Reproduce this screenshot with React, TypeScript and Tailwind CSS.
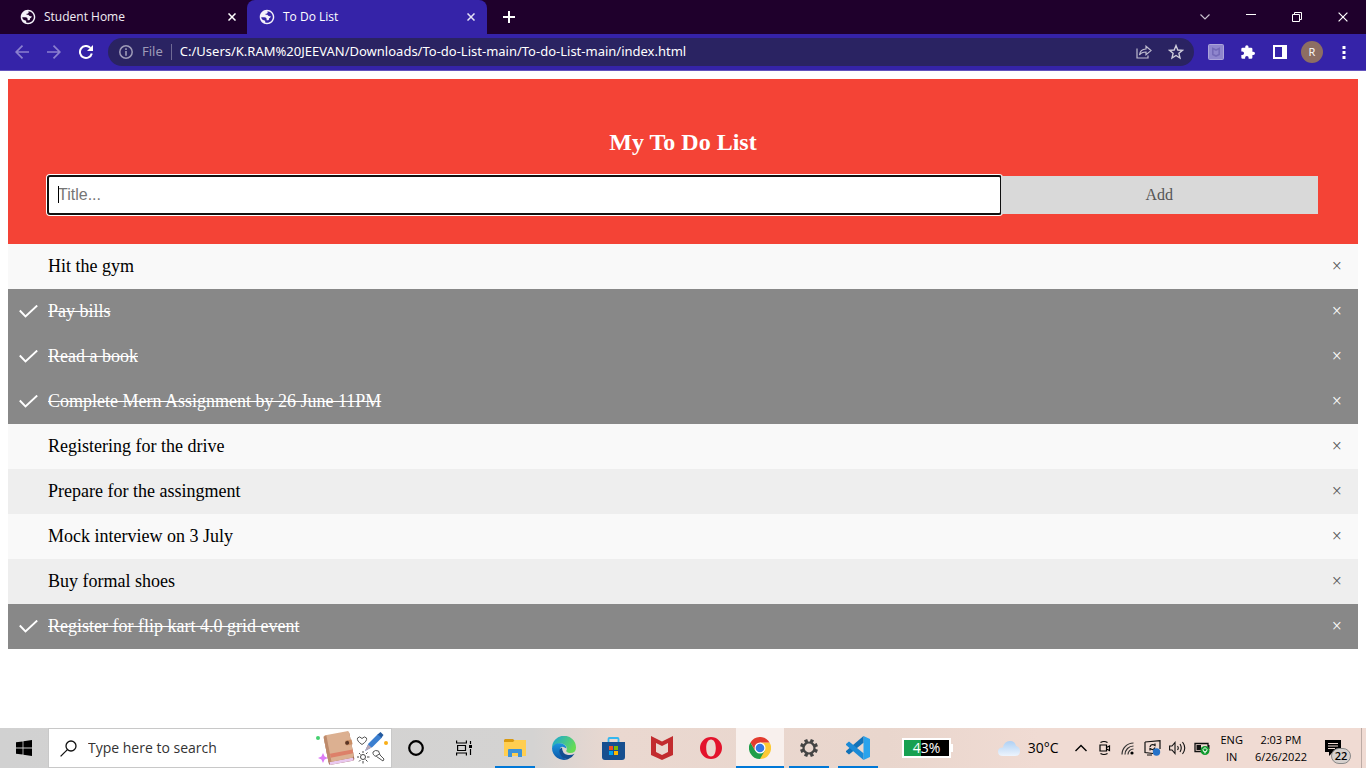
import React, { useState } from "react";

const ui = "font-['Open_Sans','Noto_Sans',sans-serif]";

function Globe() {
  return (
    <svg viewBox="1 1 22 22" className="h-4 w-4 shrink-0" aria-hidden="true">
      <path
        fill="#f4f2fa"
        d="M12 2C6.480 2 2 6.480 2 12s4.480 10 10 10 10-4.480 10-10S17.520 2 12 2zM4 12.500h4.500c2 0 3 1 3 2.800v1.200H13.500c1.200 0 1.500-1.500 1.300-2.800 1.700-.2 2.200-1.500 2.200-3.200-2 .8-3.500.2-4.500-1.500H10V7.500c1.500 0 2.800-.8 3-2.200L12.500 4c4 .3 7.500 3.500 7.500 8s-3.500 8-8 8c-1 0-1.500-.2-2.500-.5V17C6.500 17 4.500 15.500 4 12.500z"
      />
    </svg>
  );
}

function Cross({ size }: { size: "sm" | "lg" }) {
  return (
    <svg viewBox="0 0 10 10" className={size === "sm" ? "h-2 w-2" : "h-[10px] w-[10px]"} aria-hidden="true">
      <path d="M0.6 0.6 L9.4 9.4 M9.4 0.6 L0.6 9.4" stroke="currentColor" strokeWidth={size === "sm" ? 1.9 : 1.2} />
    </svg>
  );
}

function BrowserTabs() {
  return (
    <div className="flex h-[34px] items-center bg-[#1f002c] text-xs text-white">
      <div className="flex h-full w-[247px] items-center pr-[11px] pl-5">
        <Globe />
        <span className="ml-2 flex-1 text-[#f1eef4]">Student Home</span>
        <button aria-label="Close Student Home" className="text-white"><Cross size="sm" /></button>
      </div>
      <div className="flex h-full w-60 items-center rounded-t-lg bg-[#3523a8] pr-3 pl-3">
        <Globe />
        <span className="ml-2 flex-1 text-white">To Do List</span>
        <button aria-label="Close To Do List" className="text-[#e5e2f6]"><Cross size="sm" /></button>
      </div>
      <button aria-label="New tab" className="ml-4">
        <svg viewBox="0 0 12 12" className="h-3 w-3"><path d="M6 0V12M0 6H12" stroke="#fff" strokeWidth="2" /></svg>
      </button>
      <div className="ml-auto flex h-7 items-center gap-9 pr-[18px]">
        <button aria-label="Search tabs">
          <svg viewBox="0 0 10 6" className="h-[6px] w-[10px]"><path d="M0.5 0.5L5 5L9.5 0.5" fill="none" stroke="#c9c0cf" strokeWidth="1.2" /></svg>
        </button>
        <button aria-label="Minimize">
          <svg viewBox="0 0 10 10" className="h-[10px] w-[10px]"><path d="M0 2.5H10" stroke="#fff" /></svg>
        </button>
        <button aria-label="Restore">
          <svg viewBox="0 0 10 10" className="h-[10px] w-[10px]"><path d="M.5 2.5H7.5V9.5H.5ZM2.5 2.5V.5H9.5V7.5H7.5" fill="none" stroke="#fff" /></svg>
        </button>
        <button aria-label="Close window"><Cross size="lg" /></button>
      </div>
    </div>
  );
}

function Toolbar() {
  const slot = "flex w-8 items-center justify-center";
  return (
    <div className="flex h-[37px] items-center border-b border-[#6354bd] bg-[#3523a8] pl-[15px] text-white">
      <button aria-label="Back">
        <svg viewBox="0 0 14 14" className="h-[14px] w-[14px]"><path d="M14 7H1M7.5 .7L1.2 7L7.5 13.3" fill="none" stroke="#8b80cf" strokeWidth="1.7" /></svg>
      </button>
      <button aria-label="Forward" className="ml-[18px]">
        <svg viewBox="0 0 14 14" className="h-[14px] w-[14px]"><path d="M0 7H13M6.5 .7L12.8 7L6.5 13.3" fill="none" stroke="#8b80cf" strokeWidth="1.7" /></svg>
      </button>
      <button aria-label="Reload" className="ml-[18px]">
        <svg viewBox="0 0 14 14" className="h-[14px] w-[14px]">
          <path d="M12.8 8.4A6 6 0 1 1 11.4 2.9" fill="none" stroke="#fff" strokeWidth="2" />
          <path d="M14 0V6H8Z" fill="#fff" />
        </svg>
      </button>
      <div className="ml-[15px] flex h-7 min-w-0 flex-1 items-center rounded-full bg-[#2a2362] pr-[10px] pl-[11px] font-['Noto_Sans',sans-serif] text-[13px]">
        <svg viewBox="0 0 14 14" className="h-[14px] w-[14px] shrink-0" aria-hidden="true">
          <circle cx="7" cy="7" r="6.2" fill="none" stroke="#9f9bb8" strokeWidth="1.5" />
          <path d="M7 3.2V4.9M7 6V10.8" stroke="#9f9bb8" strokeWidth="1.6" />
        </svg>
        <span className="ml-[9px] text-[#9f9bb8]">File</span>
        <span className="mx-[8px] h-4 w-px bg-[#6f6a94]" />
        <input
          aria-label="Address"
          className="min-w-0 flex-1 bg-transparent text-white outline-none"
          defaultValue="C:/Users/K.RAM%20JEEVAN/Downloads/To-do-List-main/To-do-List-main/index.html"
        />
        <button aria-label="Share">
          <svg viewBox="0 0 16 14" className="h-[14px] w-4">
            <path d="M1 3.5V13H12V10.5" fill="none" stroke="#bfbccf" strokeWidth="1.2" />
            <path d="M3.5 10Q4 4.2 10 4V1.2L15 5.6L10 9.8V7Q5.5 7 3.5 10Z" fill="none" stroke="#bfbccf" strokeWidth="1.2" />
          </svg>
        </button>
        <button aria-label="Bookmark" className="ml-4">
          <svg viewBox="0 0 16 16" className="h-4 w-4"><path d="M8 1.6L9.8 6L14.5 6.3L10.9 9.3L12 14L8 11.5L4 14L5.1 9.3L1.5 6.3L6.2 6Z" fill="none" stroke="#cfcddb" strokeWidth="1.4" /></svg>
        </button>
      </div>
      <div className="mx-[6px] flex items-center">
        <button aria-label="McAfee extension" className={slot}>
          <svg viewBox="0 0 16 16" className="h-4 w-4">
            <rect x=".5" y=".5" width="15" height="15" rx="1" fill="#8f86cd" stroke="#aba4da" />
            <path d="M4.8 4.5L8 6L11.2 4.5V10.5L8 12L4.8 10.5Z" fill="none" stroke="#746ab8" strokeWidth="1.6" />
          </svg>
        </button>
        <button aria-label="Extensions" className={slot}>
          <svg viewBox="2 1 21.500 21" className="h-[14px] w-[14px]">
            <path fill="#fff" d="M21 11h-1.500V7a2 2 0 0 0-2-2h-4V3.500a2.500 2.500 0 0 0-5 0V5h-4a2 2 0 0 0-2 2v3.800H4a2.700 2.700 0 0 1 0 5.400H2.500V20a2 2 0 0 0 2 2h3.800v-1.500a2.700 2.700 0 0 1 5.400 0V22h3.800a2 2 0 0 0 2-2v-4H21a2.500 2.500 0 0 0 0-5z" />
          </svg>
        </button>
        <button aria-label="Side panel" className={slot}>
          <svg viewBox="0 0 14 14" className="h-[14px] w-[14px]"><path d="M0 0H14V14H0ZM2 2V12H9V2Z" fill="#fff" fillRule="evenodd" /></svg>
        </button>
        <button aria-label="Profile" className={slot}>
          <span className="h-[22px] w-[22px] rounded-full bg-[#8d6e63] text-center text-[11px] leading-[22px]">R</span>
        </button>
        <button aria-label="Menu" className={slot}>
          <svg viewBox="0 0 4 14" className="h-[14px] w-1"><path d="M.5 1h3v3h-3zM.5 6h3v3h-3zM.5 11h3v3h-3z" fill="#fff" /></svg>
        </button>
      </div>
    </div>
  );
}

const initial = [
  { text: "Hit the gym", done: false },
  { text: "Pay bills", done: true },
  { text: "Read a book", done: true },
  { text: "Complete Mern Assignment by 26 June 11PM", done: true },
  { text: "Registering for the drive", done: false },
  { text: "Prepare for the assingment", done: false },
  { text: "Mock interview on 3 July", done: false },
  { text: "Buy formal shoes", done: false },
  { text: "Register for flip kart 4.0 grid event", done: true },
];

function TodoPage() {
  const [items, setItems] = useState(initial);
  const [title, setTitle] = useState("");
  const add = (e: React.FormEvent) => {
    e.preventDefault();
    if (!title) return;
    setItems([...items, { text: title, done: false }]);
    setTitle("");
  };
  const toggle = (i: number) => setItems(items.map((it, n) => (n === i ? { ...it, done: !it.done } : it)));
  return (
    <main className="flex-1 bg-white p-2 font-['Liberation_Serif',serif]">
      <header className="bg-[#f44336] px-10 pt-[50px] pb-[30px] text-center text-white">
        <h1 className="mb-5 text-2xl leading-[27px] font-bold">My To Do List</h1>
        <form className="flex" onSubmit={add}>
          <div className="relative w-3/4">
            <input
              aria-label="Title"
              placeholder="Title..."
              value={title}
              onChange={(e) => setTitle(e.target.value)}
              className="block h-[38px] w-full rounded-[2px] bg-white p-[10px] font-['Liberation_Sans',sans-serif] text-base text-black shadow-[0_0_0_2px_#fff] outline-2 -outline-offset-1 outline-[#101010] placeholder:text-[#757575]"
            />
            {title === "" && <span className="absolute top-[10px] left-[10px] h-[17px] w-px bg-black" />}
          </div>
          <button className="relative h-[38px] w-1/4 bg-[#d9d9d9] text-base text-[#555]">Add</button>
        </form>
      </header>
      <ul className="text-lg leading-[21px]">
        {items.map((it, i) => (
          <li
            key={i}
            className={
              it.done
                ? "flex items-center bg-[#888] text-white"
                : "flex items-center text-black odd:bg-[#f9f9f9] even:bg-[#eee]"
            }
          >
            <button onClick={() => toggle(i)} className="flex flex-1 items-center py-3 text-left">
              <span className="w-10 pl-[11px]">
                {it.done && (
                  <svg viewBox="0 0 19 14" className="h-[14px] w-[19px]" aria-hidden="true">
                    <path d="M.8 5.500L6.500 11.500L18.200 .5" fill="none" stroke="#fff" strokeWidth="1.900" />
                  </svg>
                )}
              </span>
              <span className={it.done ? "line-through" : ""}>{it.text}</span>
            </button>
            <button
              aria-label={"Remove " + it.text}
              onClick={() => setItems(items.filter((_, n) => n !== i))}
              className={it.done ? "px-4 py-3" : "px-4 py-3 text-[#555]"}
            >
              ×
            </button>
          </li>
        ))}
      </ul>
    </main>
  );
}

function SearchArt() {
  return (
    <svg viewBox="0 0 76 38" className="h-[38px] w-[76px]" aria-hidden="true">
      <circle cx="3" cy="9" r="2" fill="#45d070" />
      <path d="M8 24L9.600 27.400L13 29L9.600 30.600L8 34L6.400 30.600L3 29L6.400 27.400Z" fill="#dc7cf5" />
      <g transform="rotate(-11 24 19)">
        <rect x="11" y="5" width="26" height="29" rx="2" fill="#9c6650" />
        <rect x="12" y="31" width="24" height="3" fill="#e9c8ef" />
        <rect x="11" y="4" width="26" height="27" rx="2" fill="#dcb091" />
        <path d="M11 5V31H14V4Z" fill="#bd8a6b" />
        <path d="M14 23H37V27H14Z" fill="#dd8069" />
        <path d="M32 13H38V18H32Q29.500 15.500 32 13Z" fill="#c98e65" />
        <circle cx="33" cy="15.500" r="2" fill="#593526" />
      </g>
      <path d="M47 15.500Q41.500 12 42.500 9Q44.500 6.500 47 9.500Q49.500 6.500 51.500 9Q52.500 12 47 15.500Z" fill="none" stroke="#555" />
      <path d="M50 22L53.500 14.500L63 5L67 8.500L57.500 18Z" fill="#3b7fd0" />
      <path d="M62.500 5.500L65.500 3L68.500 6L66.500 8.800Z" fill="#245a9f" />
      <path d="M50 22L53 15.500L56.500 18.500Z" fill="#b9a6b3" />
      <circle cx="71" cy="14" r="2" fill="#f8ae17" />
      <circle cx="48" cy="28" r="2.500" fill="none" stroke="#444" />
      <path d="M48 22V24M48 32V34.500M42 28H44M52 28H54.500M44 24L45.500 25.500M50.500 30.500L52.500 32.500M52.500 23.500L51 25M44 32.500L45.500 31" stroke="#444" />
      <path d="M58 23Q60 20.500 63.500 22L65 26L69 30L68 32L61.500 27.500Q57.500 26.500 58 23ZM61 27L64.500 25" fill="none" stroke="#555" />
    </svg>
  );
}

function TaskButton({ label, state, children }: { label: string; state?: "open" | "active"; children: React.ReactNode }) {
  return (
    <button
      aria-label={label}
      className={
        state === "active"
          ? "flex h-10 w-12 items-center justify-center border-b-2 border-[#0078d7] bg-[#f8f0ed] pt-[2px]"
          : state === "open"
            ? "mx-1 flex h-10 w-10 items-center justify-center border-b-2 border-[#0078d7] pt-[2px]"
            : "flex h-10 w-12 items-center justify-center"
      }
    >
      {children}
    </button>
  );
}

const teeth = [0, 45, 90, 135, 180, 225, 270, 315];

function Taskbar() {
  return (
    <footer className="flex h-10 items-center bg-[linear-gradient(90deg,#d1d1d1,#d4d3d2_39%,#ead8d0_45%,#e9d6cd_65%,#f0dbd3_76%)] text-black">
      <button aria-label="Start" className="flex h-10 w-12 shrink-0 items-center justify-center">
        <svg viewBox="0 0 16 16" className="h-4 w-4"><path d="M0 2.300L6.600 1.400V7.600H0ZM7.400 1.300L16 0V7.600H7.400ZM0 8.400H6.600V14.600L0 13.700ZM7.400 8.400H16V16L7.400 14.800Z" /></svg>
      </button>
      <label className="flex h-10 w-[344px] shrink-0 items-center border border-[#c8c8c8] bg-white pl-[11px]">
        <svg viewBox="0 0 17 17" className="h-[17px] w-[17px] shrink-0" aria-hidden="true">
          <circle cx="11" cy="6" r="5" fill="none" stroke="#111" strokeWidth="1.300" />
          <path d="M7.400 9.600L.6 16.400" stroke="#111" strokeWidth="1.300" />
        </svg>
        <input aria-label="Search" placeholder="Type here to search" className="ml-[11px] min-w-0 flex-1 bg-transparent text-sm outline-none placeholder:text-[#333]" />
        <SearchArt />
      </label>
      <nav className="flex shrink-0">
        <TaskButton label="Cortana">
          <svg viewBox="0 0 16 16" className="h-4 w-4"><circle cx="8" cy="8" r="6.800" fill="none" stroke="#000" strokeWidth="2.200" /></svg>
        </TaskButton>
        <TaskButton label="Task view">
          <svg viewBox="0 0 16 16" className="h-4 w-4">
            <path d="M.6 .5V3H10.400V.5M.6 15.500V13H10.400V15.500M1.600 5.500H9.500V10.500H1.600ZM14.500 1V4M14.500 9V15" fill="none" stroke="#000" strokeWidth="1.200" />
            <path d="M13 5h3v3h-3z" />
          </svg>
        </TaskButton>
      </nav>
      <nav className="ml-[3px] flex shrink-0 gap-px">
        <TaskButton label="File Explorer" state="open">
          <svg viewBox="0 0 22 18" className="h-[18px] w-[22px]">
            <path d="M1 0H9L11 2V6H0V1Z" fill="#d99a10" />
            <path d="M0 3H9L11 1H22V17H0Z" fill="#ffce50" />
            <path d="M4 18V11Q4 10 5 10H17Q18 10 18 11V18H14V14H8V18Z" fill="#3d93d8" />
          </svg>
        </TaskButton>
        <TaskButton label="Edge">
          <svg viewBox="0 0 24 24" className="h-6 w-6">
            <defs>
              <linearGradient id="edgeTop" x1="0" y1="0" x2="1" y2=".5"><stop offset="0" stopColor="#16a3dc" /><stop offset="1" stopColor="#66dc55" /></linearGradient>
              <linearGradient id="edgeLow" x1="0" y1="0" x2="0" y2="1"><stop offset="0" stopColor="#1c95df" /><stop offset="1" stopColor="#0b55a5" /></linearGradient>
            </defs>
            <path d="M0 12A12 12 0 0 1 24 11.500Q24 17 18 17Q14 17 14.300 14.500Q16 12 13 9Q7 5 0 12Z" fill="url(#edgeTop)" />
            <path d="M0 12Q2 7 8 7.300Q14 8 14.500 12.500Q8 8.500 8 14Q8.500 22 16 23.300A12 12 0 0 1 0 12Z" fill="url(#edgeLow)" />
            <path d="M10 11.500Q6 13 8 18Q10 23 16 23.300Q20.500 21.500 22.500 17.800Q19.500 19.500 16 19Q10 18 10 11.500Z" fill="#124d91" />
          </svg>
        </TaskButton>
        <TaskButton label="Microsoft Store">
          <svg viewBox="0 0 23 23" className="h-[23px] w-[23px]">
            <path d="M6.500 6V2Q6.500 1 7.500 1H15.500Q16.500 1 16.500 2V6" fill="none" stroke="#35b7ef" strokeWidth="1.800" />
            <path d="M0 5H23V20Q23 23 20 23H3Q0 23 0 20Z" fill="#174f8f" />
            <path d="M7 9h4v4H7z" fill="#f25022" /><path d="M12 9h4v4h-4z" fill="#7fba00" />
            <path d="M7 14h4v4H7z" fill="#00a4ef" /><path d="M12 14h4v4h-4z" fill="#ffb900" />
          </svg>
        </TaskButton>
        <TaskButton label="McAfee">
          <svg viewBox="0 0 22 24" className="h-6 w-[22px]"><path d="M0 0L11 5.500L22 0V19L11 24L0 19ZM5 7V16L11 19L17 16V7L11 10Z" fill="#c22c2f" fillRule="evenodd" /></svg>
        </TaskButton>
        <TaskButton label="Opera">
          <svg viewBox="0 0 22 22" className="h-[22px] w-[22px]"><path d="M11 0A11 11 0 1 0 11 22A11 11 0 1 0 11 0ZM11 2.500C14 2.500 15.800 6 15.800 11S14 19.500 11 19.500S6.200 16 6.200 11S8 2.500 11 2.500Z" fill="#e3132c" fillRule="evenodd" /></svg>
        </TaskButton>
        <TaskButton label="Chrome" state="active">
          <svg viewBox="0 0 22 22" className="h-[22px] w-[22px]">
            <path d="M11 11L11 5.500H20.530A11 11 0 0 1 11 22Z" fill="#fcc934" />
            <path d="M1.470 5.500A11 11 0 0 0 11 22L15.760 13.750L11 11L6.240 13.750Z" fill="#1e9e4a" />
            <path d="M1.470 5.500L6.240 13.750L11 11V5.500H20.530A11 11 0 0 0 1.470 5.500Z" fill="#e33b2e" />
            <circle cx="11" cy="11" r="5.500" fill="#fff" />
            <circle cx="11" cy="11" r="4.300" fill="#3478e5" />
          </svg>
        </TaskButton>
        <TaskButton label="Settings" state="open">
          <svg viewBox="0 0 18 18" className="h-[18px] w-[18px]">
            <circle cx="9" cy="9" r="5.500" fill="none" stroke="#444" strokeWidth="2.200" />
            {teeth.map((a) => (
              <path key={a} d="M7.300 0H10.700V3H7.300Z" fill="#444" transform={`rotate(${a + 22.5} 9 9)`} />
            ))}
          </svg>
        </TaskButton>
        <TaskButton label="Visual Studio Code" state="open">
          <svg viewBox="0 0 24 24" className="h-6 w-6">
            <path d="M17.500 0L24 3V21L17.500 24Z" fill="#2aa3ec" />
            <path d="M17.500 0V6.800L3 18.400L0 16V15Z" fill="#1272b8" />
            <path d="M17.500 24V17.200L3 5.600L0 8V9Z" fill="#1b8ad6" />
          </svg>
        </TaskButton>
      </nav>
      <div className="ml-5 flex shrink-0 items-center">
        <div className="flex h-5 w-[49px] items-center justify-center border-2 border-white bg-linear-to-r from-[#17a050] from-38% to-black to-38% text-sm leading-4 text-white">43%</div>
        <span className="h-2 w-[2px] bg-white" />
      </div>
      <div className="ml-auto flex shrink-0 items-center">
        <svg viewBox="0 0 22 15" className="h-[15px] w-[22px]" aria-hidden="true">
          <defs>
            <linearGradient id="cloud" x1="0" y1="0" x2="0" y2="1"><stop offset="0" stopColor="#aed0f4" /><stop offset="1" stopColor="#edf4fd" /></linearGradient>
          </defs>
          <path d="M5 15Q0 15 0 10.500Q0 6.500 5 6.500Q6 0 12 0Q17 0 18 5Q22 6 22 10Q22 15 17 15Z" fill="url(#cloud)" />
        </svg>
        <span className="ml-2 text-sm">30°C</span>
        <div className="ml-[17px] flex items-center gap-[10px]">
          <svg viewBox="0 0 12 8" className="h-2 w-3"><path d="M.5 7L6 1.500L11.500 7" fill="none" stroke="#000" strokeWidth="1.400" /></svg>
          <svg viewBox="0 0 14 16" className="h-4 w-[14px]"><path d="M3.500 2.500Q7 .5 10.500 2.500M3.500 13.500Q7 15.500 10.500 13.500M3 5H9.500V11H3ZM9.500 7.500L12.500 6V10.500L9.500 9" fill="none" stroke="#000" strokeWidth="1.200" /></svg>
          <svg viewBox="0 0 13 13" className="h-[13px] w-[13px]">
            <path d="M1 12.500A11.500 11.500 0 0 1 12.500 1M4 12.500A8.500 8.500 0 0 1 12.500 4M7 12.500A5.500 5.500 0 0 1 12.500 7" fill="none" stroke="#333" strokeWidth="1.200" />
            <circle cx="11" cy="11" r="1.600" />
          </svg>
          <svg viewBox="0 0 17 16" className="h-4 w-[17px]">
            <path d="M1 2L16 .7V9M1 2V12.500L9 13.500M6 7Q6.500 4.500 9 4.500L11 5.500V3.500M11 7.500Q10 10 8 9.500L6 8.500V10.500M3 15H8" fill="none" stroke="#111" strokeWidth="1.200" />
            <circle cx="12.500" cy="12" r="3.700" fill="#2672c8" />
          </svg>
          <svg viewBox="0 0 17 14" className="-ml-[2px] h-[14px] w-[17px]"><path d="M.6 5H3L6 1.500V12.500L3 9H.6ZM8.500 5Q10 7 8.500 9M11 3Q13.500 7 11 11M13.500 1Q18 7 13.500 13" fill="none" stroke="#111" strokeWidth="1.100" /></svg>
          <svg viewBox="0 0 16 13" className="-ml-[2px] h-[13px] w-4">
            <path d="M1 1.500H14V9.500H1Z" fill="none" stroke="#111" strokeWidth="1.300" />
            <path d="M2.500 3H7V8H2.500ZM14 3h1.500v4H14z" fill="#111" />
            <circle cx="11" cy="8.500" r="4.500" fill="#119a2e" />
            <path d="M11 11.500V9M9 7.500Q9 10 11 10Q13 10 13 7.500L11 5.500Z" fill="none" stroke="#fff" />
          </svg>
        </div>
        <div className="ml-[10px] text-center text-[11px] leading-[17px]"><div>ENG</div><div>IN</div></div>
        <div className="ml-3 text-center text-[11px] leading-[17px]"><div>2:03 PM</div><div>6/26/2022</div></div>
        <button aria-label="Notifications" className="relative mt-2 ml-[18px] flex h-6 w-[26px] items-start">
          <svg viewBox="0 0 16 16" className="h-4 w-4"><path d="M0 0H16V12H8L4 16V12H0Z" /><path d="M3 3.500H13M3 6H13M3 8.500H10" stroke="#efdad2" /></svg>
          <span className="absolute right-0 bottom-0 h-4 w-5 rounded-full border border-[#888] bg-[#d6d0cd] text-center text-[11px] leading-[14px] font-semibold">22</span>
        </button>
        <span className="ml-[10px] h-10 w-px bg-[#bcaba5]" />
        <span className="w-1" />
      </div>
    </footer>
  );
}

export default function App() {
  return (
    <div className={"flex min-h-screen flex-col " + ui}>
      <BrowserTabs />
      <Toolbar />
      <TodoPage />
      <Taskbar />
    </div>
  );
}
